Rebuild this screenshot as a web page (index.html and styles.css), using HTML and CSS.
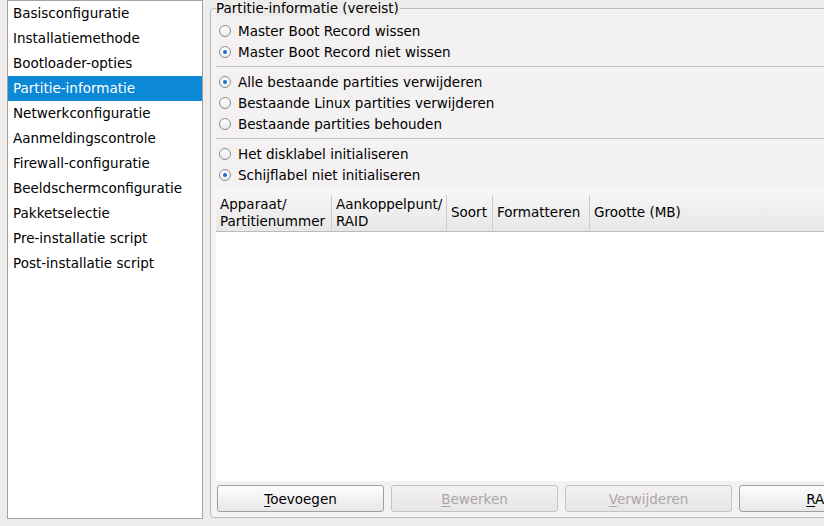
FILE: index.html
```html
<!DOCTYPE html>
<html>
<head>
<meta charset="utf-8">
<link rel="stylesheet" href="styles.css">
</head>
<body>
<div class="window">
  <ul class="sidebar">
    <li>Basisconfiguratie</li>
    <li>Installatiemethode</li>
    <li>Bootloader-opties</li>
    <li class="selected">Partitie-informatie</li>
    <li>Netwerkconfiguratie</li>
    <li>Aanmeldingscontrole</li>
    <li>Firewall-configuratie</li>
    <li>Beeldschermconfiguratie</li>
    <li>Pakketselectie</li>
    <li>Pre-installatie script</li>
    <li>Post-installatie script</li>
  </ul>
  <fieldset class="frame">
    <legend>Partitie-informatie (vereist)</legend>
    <div class="group first">
      <div class="radio"><span class="dot"></span>Master Boot Record wissen</div>
      <div class="radio"><span class="dot on"></span>Master Boot Record niet wissen</div>
    </div>
    <div class="sep"></div>
    <div class="group">
      <div class="radio"><span class="dot on"></span>Alle bestaande partities verwijderen</div>
      <div class="radio"><span class="dot"></span>Bestaande Linux partities verwijderen</div>
      <div class="radio"><span class="dot"></span>Bestaande partities behouden</div>
    </div>
    <div class="sep"></div>
    <div class="group">
      <div class="radio"><span class="dot"></span>Het disklabel initialiseren</div>
      <div class="radio"><span class="dot on"></span>Schijflabel niet initialiseren</div>
    </div>
    <div class="table">
      <div class="thead">
        <div class="th c1">Apparaat/<br>Partitienummer</div>
        <div class="th c2">Aankoppelpunt/<br>RAID</div>
        <div class="th c3">Soort</div>
        <div class="th c4">Formatteren</div>
        <div class="th c5">Grootte (MB)</div>
      </div>
      <div class="tbody"></div>
    </div>
    <div class="buttons">
      <button class="btn"><u>T</u>oevoegen</button>
      <button class="btn" disabled><u>B</u>ewerken</button>
      <button class="btn" disabled><u>V</u>erwijderen</button>
      <button class="btn"><u>R</u>AID</button>
    </div>
  </fieldset>
</div>
</body>
</html>
```
FILE: styles.css
```css
html, body {
  margin: 0;
  padding: 0;
  width: 824px;
  height: 526px;
  overflow: hidden;
  background: #edeceb;
  font-family: "DejaVu Sans", sans-serif;
  font-size: 13.5px;
  color: #000;
}
.window {
  display: flex;
  align-items: flex-start;
  gap: 7px;
  padding-left: 7px;
}
.sidebar {
  list-style: none;
  margin: 0;
  padding: 0;
  width: 194px;
  height: 517px;
  flex: none;
  background: #fff;
  border: 1px solid #a7a2a2;
}
.sidebar li {
  height: 25px;
  line-height: 25px;
  padding-left: 5px;
  white-space: nowrap;
}
.sidebar li.selected {
  background: #0b88d6;
  color: #fff;
}
.frame {
  flex: none;
  margin: 0;
  width: 830px;
  height: 507px;
  padding: 4px 0 5px 5px;
  border: 1px solid #bdbaba;
  border-radius: 4px;
  background: #f3f1f1;
  display: flex;
  flex-direction: column;
  box-sizing: content-box;
  position: relative;
}
.frame legend {
  padding: 0 1px 0 0;
  margin-left: 0;
  line-height: 16px;
  height: 16px;
  background: #edeceb;
}
.group { display: flex; flex-direction: column; }
.radio {
  height: 21px;
  display: flex;
  align-items: center;
  white-space: nowrap;
}
.dot {
  width: 10px;
  height: 10px;
  border: 1px solid #8e8b8b;
  border-radius: 50%;
  background: linear-gradient(#ffffff, #ecebeb);
  margin: 0 7px 0 3px;
  position: relative;
  flex: none;
}
.dot.on::after {
  content: "";
  position: absolute;
  left: 3px;
  top: 3px;
  width: 4px;
  height: 4px;
  border-radius: 50%;
  background: #1a6fd0;
}
.sep {
  height: 1px;
  background: #c3c0c0;
  margin: 4px 0 4px 0;
}
.table {
  margin-top: 4px;
  display: flex;
  flex-direction: column;
  flex: 1;
  background: #fff;
}
.thead {
  display: flex;
  height: 43px;
  border-bottom: 1px solid #bdbaba;
  background: linear-gradient(#f8f7f7, #e8e6e6);
  align-items: center;
  flex: none;
  padding-top: 5px;
  box-sizing: border-box;
}
.th {
  height: 35px;
  display: flex;
  align-items: center;
  padding-left: 4px;
  line-height: 17px;
  border-right: 1px solid #cdcaca;
  white-space: nowrap;
  box-sizing: border-box;
}
.c1 { width: 116px; }
.c2 { width: 115px; }
.c3 { width: 46px; }
.c4 { width: 97px; }
.c5 { border-right: none; }
.tbody { flex: 1; background: #fff; }
.buttons {
  display: flex;
  gap: 7px;
  margin-top: 4px;
  padding-left: 1px;
  flex: none;
}
.btn {
  width: 167px;
  height: 27px;
  flex: none;
  font-family: "DejaVu Sans", sans-serif;
  font-size: 13.5px;
  color: #000;
  border: 1px solid #a29e9e;
  border-radius: 3px;
  background: linear-gradient(#fdfdfd, #e9e7e7);
  padding: 0;
}
.btn:disabled {
  color: #aaa7a7;
  border-color: #c6c3c3;
  background: linear-gradient(#f4f2f2, #e6e4e4);
}
.btn u { text-decoration-thickness: 1px; text-underline-offset: 2px; }
```
